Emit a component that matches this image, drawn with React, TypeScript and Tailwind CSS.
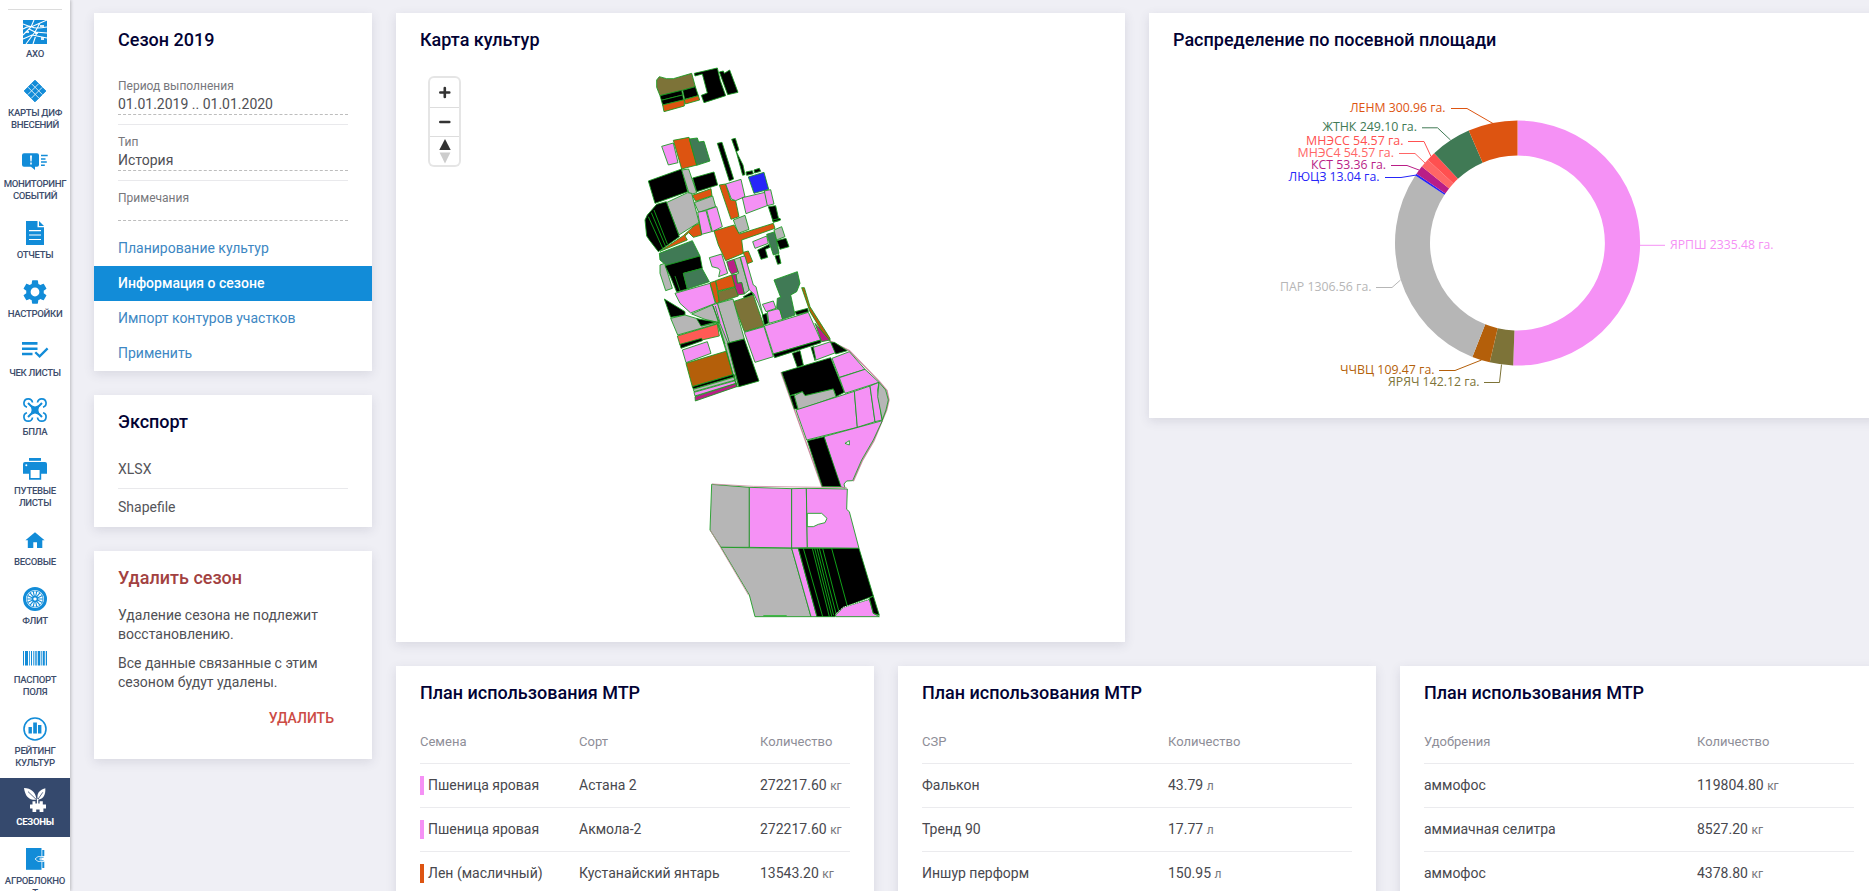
import type { ReactNode } from "react";
import { MdSettings } from "react-icons/md";

const BLUE = "#128cd8";

function Icon({ children }: { children: ReactNode }) {
  return (
    <svg viewBox="0 0 24 24" className="size-6 overflow-visible" fill="currentColor" stroke="none">
      {children}
    </svg>
  );
}

function spokes(count: number, from: number, to: number) {
  return Array.from({ length: count }, (_, i) => {
    const a = (i / count) * Math.PI * 2;
    return `M${12 + from * Math.cos(a)} ${12 + from * Math.sin(a)}L${12 + to * Math.cos(a)} ${12 + to * Math.sin(a)}`;
  }).join("");
}

const icons: Record<string, ReactNode> = {
  fields: (
    <Icon>
      <rect width="24" height="24" />
      <path
        d="M0 4L8 7L24 0M0 9Q6 5 9 7T24 7M11 0L8 7L0 15M17 3L12 12L3 24M0 19L9 15L24 18M6 9L12 12L24 13M14 12L10 24"
        fill="none"
        stroke="#fff"
        strokeWidth="1.1"
      />
      <path d="M17 5h4v2h-4zM3 11h3v2H3zM12 12h3v2h-3zM18 17h3v3h-3z" fill="#fff" opacity=".85" />
    </Icon>
  ),
  diamond: (
    <Icon>
      <path d="M12 1.2L22.8 12L12 22.8L1.2 12Z" stroke="currentColor" strokeLinejoin="round" />
      <path
        d="M5 8.2L15.8 19M8.6 4.8L19.4 15.6M8.4 19.2L19.2 8.4M4.8 15.6L15.6 4.8"
        stroke="#fff"
        strokeWidth="1"
        opacity=".8"
      />
    </Icon>
  ),
  monitor: (
    <Icon>
      <path d="M1 3.3H14Q16 3.3 16 5.3V14.7Q16 16.7 14 16.7H12V20L8 16.7H1Q-1 16.7 -1 14.7V5.3Q-1 3.3 1 3.3Z" />
      <path d="M7 5.5h2l-.4 6H7.4zM7.2 12.6h1.6v1.8H7.2z" fill="#fff" />
      <path d="M18 5.5h6.7M18 9h4.5M18 12h5.8M18 15.3h3.8" stroke="currentColor" strokeWidth="1.5" />
    </Icon>
  ),
  report: (
    <Icon>
      <path d="M3 0H14.5V6.3H21V24H3Z" />
      <path d="M16 0L21 5H16Z" />
      <path d="M6 9.7h12M6 14h12M6 18.5h12" stroke="#fff" strokeWidth="1.2" />
    </Icon>
  ),
  settings: <MdSettings className="size-6 scale-[1.22]" />,
  checklist: (
    <Icon>
      <path d="M-1 4.4H14.5M-1 9.8H14.5M-1 15H9.5" stroke="currentColor" strokeWidth="2.6" fill="none" />
      <path d="M12.3 13.2L16.6 17.4L24.6 9.4" stroke="currentColor" strokeWidth="2.3" fill="none" />
    </Icon>
  ),
  drone: (
    <Icon>
      <g fill="none" stroke="currentColor" strokeWidth="1.7">
        <path d="M4 9.2A4.3 4.3 0 1 1 9.5 4.5M14.5 4.5A4.3 4.3 0 1 1 20 9.2M20 14.8A4.3 4.3 0 1 1 14.5 19.5M9.5 19.5A4.3 4.3 0 1 1 4 14.8" />
        <path d="M5 5L9.5 9.5M19 5L14.5 9.5M5 19L9.5 14.5M19 19L14.5 14.5" strokeWidth="2" />
      </g>
      <path d="M7.5 7L12 8.6L16.5 7L15.4 12L16.5 17L12 15.4L7.5 17L8.6 12Z" />
    </Icon>
  ),
  printer: (
    <Icon>
      <path d="M6 1h12v2.8H6z" />
      <path d="M2 5H22Q24 5 24 7V16.8H18.2V22.7H6V16.8H0V7Q0 5 2 5Z" />
      <path d="M7.6 13h9v8h-9z" fill="#fff" />
      <circle cx="3.3" cy="8.3" r="1" fill="#fff" />
    </Icon>
  ),
  house: (
    <Icon>
      <path d="M12 4.2L21.6 12.2H19.3V20H14V14.3H10.3V20H4.8V12.2H2.4Z" />
    </Icon>
  ),
  wheel: (
    <Icon>
      <circle cx="12" cy="12" r="10.5" fill="none" stroke="currentColor" strokeWidth="3" />
      <path d={spokes(14, 2, 8.2)} stroke="currentColor" strokeWidth="1.1" />
      <circle cx="12" cy="12" r="8" fill="none" stroke="currentColor" strokeWidth=".7" />
      <circle cx="12" cy="12" r="2.4" fill="none" stroke="currentColor" strokeWidth="1.3" />
    </Icon>
  ),
  barcode: (
    <Icon>
      <path d="M0 5h1v14.5H0zM2 5h3v14.5H2zM6.2 5h.8v14.5h-.8zM8 5h1v14.5H8zM10.3 5h1v14.5h-1zM12.3 5h1.4v14.5h-1.4zM14.7 5h2.6v14.5h-2.6zM18.3 5h.8v14.5h-.8zM19.8 5h2v14.5h-2zM22.8 5h1.2v14.5h-1.2z" />
    </Icon>
  ),
  rating: (
    <Icon>
      <circle cx="12" cy="12" r="11" fill="none" stroke="currentColor" strokeWidth="1.6" />
      <path d="M5.5 10h3.4v6.5H5.5zM10.2 5.4h3.7v11.1h-3.7zM15 8h3.4v8.5H15z" />
    </Icon>
  ),
  seasons: (
    <Icon>
      <path d="M1 0C8 .3 12.5 3.5 13.6 11.8C6.3 12.4 2.3 9 1 0Z" />
      <path d="M22.3 .2C22.8 6.2 20.6 11 15 11.8C13 6.5 16 1.6 22.3 .2Z" />
      <path d="M5 3.6L14 12.2M19.8 4.3L14.8 11.5" stroke="#35496d" strokeWidth=".8" fill="none" />
      <path d="M14.6 11V16" stroke="currentColor" strokeWidth="1.4" />
      <path d="M9.5 13.2H12.4V15.6H16.6V13.2H19.8V16.6H23V20.4H20.4V24H16.6V21.6H13.2V24H9.5V20.4H7V16.6H9.5Z" />
    </Icon>
  ),
  notebook: (
    <Icon>
      <path d="M3 1H18.5V22.8H3Z" />
      <path d="M19.3 3h2v6h-2zM19.3 14.5h2v6.5h-2z" />
      <path d="M21 9.6H15L12 12L15 14.4H21V12.9H17V11.1H21Z" fill={BLUE} stroke="#fff" strokeWidth=".8" />
    </Icon>
  ),
};

const menu: { icon: string; label: string[]; active?: boolean }[] = [
  { icon: "fields", label: ["АХО"] },
  { icon: "diamond", label: ["КАРТЫ ДИФ", "ВНЕСЕНИЙ"] },
  { icon: "monitor", label: ["МОНИТОРИНГ", "СОБЫТИЙ"] },
  { icon: "report", label: ["ОТЧЕТЫ"] },
  { icon: "settings", label: ["НАСТРОЙКИ"] },
  { icon: "checklist", label: ["ЧЕК ЛИСТЫ"] },
  { icon: "drone", label: ["БПЛА"] },
  { icon: "printer", label: ["ПУТЕВЫЕ", "ЛИСТЫ"] },
  { icon: "house", label: ["ВЕСОВЫЕ"] },
  { icon: "wheel", label: ["ФЛИТ"] },
  { icon: "barcode", label: ["ПАСПОРТ", "ПОЛЯ"] },
  { icon: "rating", label: ["РЕЙТИНГ", "КУЛЬТУР"] },
  { icon: "seasons", label: ["СЕЗОНЫ"], active: true },
  { icon: "notebook", label: ["АГРОБЛОКНО", "Т"] },
];

function Sidebar() {
  return (
    <nav className="z-10 flex w-[70px] shrink-0 flex-col bg-white pt-[9px] shadow-[1px_0_3px_rgba(0,0,0,0.22)]">
      <div className="mx-2 h-px shrink-0 bg-[#dcdcdc]" />
      {menu.map((item) => (
        <div
          key={item.icon}
          className={`flex shrink-0 flex-col items-center pt-2.5 pb-[9px] ${item.active ? "bg-[#35496d] text-white" : "text-[#128cd8]"}`}
        >
          {icons[item.icon]}
          <div
            className={`mt-1 text-center text-[9.6px] leading-3 tracking-[-0.32px] whitespace-nowrap ${item.active ? "font-bold text-white" : "font-medium text-[#3d4d6c]"}`}
          >
            {item.label.map((line) => (
              <div key={line}>{line}</div>
            ))}
          </div>
        </div>
      ))}
    </nav>
  );
}

function Card({ title, className = "", danger, children }: { title: string; className?: string; danger?: boolean; children: ReactNode }) {
  return (
    <section className={`shrink-0 bg-white shadow-[0_3px_10px_rgba(60,60,90,0.13)] ${className}`}>
      <h2 className={`px-6 pt-4 text-[18px] leading-[22px] font-medium ${danger ? "text-[#a24141]" : "text-[#020234]"}`}>{title}</h2>
      {children}
    </section>
  );
}

function Field({ label, value, last }: { label: string; value?: string; last?: boolean }) {
  return (
    <div className={last ? "" : "mb-[9px] border-b border-[#e9e9ec] pb-[9px]"}>
      <div className="text-[12px] leading-4 text-[#77777c]">{label}</div>
      <div className={`border-b border-dashed border-[#bdbdbd] text-[14px] leading-5 text-[#505055] ${last ? "h-[15px]" : "h-[21px]"}`}>{value}</div>
    </div>
  );
}

const links = ["Планирование культур", "Информация о сезоне", "Импорт контуров участков", "Применить"];

function LeftColumn() {
  return (
    <div className="flex w-[278px] shrink-0 flex-col gap-6">
      <Card title="Сезон 2019" className="h-[358px]">
        <div className="mx-6 mt-[27px] mb-[10px] flex flex-col">
          <Field label="Период выполнения" value="01.01.2019 .. 01.01.2020" />
          <Field label="Тип" value="История" />
          <Field label="Примечания" last />
        </div>
        <ul>
          {links.map((link, i) => (
            <li
              key={link}
              className={`h-[35px] px-6 text-[14px] leading-[35px] ${i === 1 ? "bg-[#128cd8] font-medium text-white" : "text-[#3d87c3]"}`}
            >
              {link}
            </li>
          ))}
        </ul>
      </Card>
      <Card title="Экспорт" className="h-[132px]">
        <div className="mx-6 mt-[17px] text-[14px] text-[#55555a]">
          <div className="h-[39px] border-b border-[#e9e9ec] leading-[38px]">XLSX</div>
          <div className="leading-[36px]">Shapefile</div>
        </div>
      </Card>
      <Card title="Удалить сезон" className="h-[208px]" danger>
        <div className="mx-6 mt-[17px] text-[14px] leading-[19px] text-[#505055]">
          <p>
            Удаление сезона не подлежит
            <br />
            восстановлению.
          </p>
          <p className="mt-2.5">
            Все данные связанные с этим
            <br />
            сезоном будут удалены.
          </p>
        </div>
        <div className="mt-4 pr-[38px] text-right text-[14px] leading-5 font-medium text-[#cc4b45]">УДАЛИТЬ</div>
      </Card>
    </div>
  );
}

const P = "#f591f5";
const O = "#dd5411";
const G = "#407a55";
const K = "#000000";
const S = "#b6b6b6";
const V = "#7d7338";
const N = "#b45f0a";
const M = "#b91e87";
const R = "#ff5a55";
const B = "#2626f8";
const W = "#ffffff";

type Parcel = [string, string];

const north: Parcel[] = [
  [V, "80,90 88,80 110,86 130,86 185,70 196,110 157,121 90,137 80,112"],
  [K, "90,137 155,121 158,135 94,151"],
  [K, "94,151 158,135 161,150 98,165"],
  [K, "158,121 196,110 205,137 164,148"],
  [O, "98,165 163,149 163,168 102,185"],
  [O, "163,149 205,137 209,150 166,162"],
  [K, "193,70 262,54 271,92 287,137 222,158 214,136 232,129 217,72 195,78"],
  [K, "268,66 280,63 283,70 299,60 324,127 293,134"],
  [P, "95,289 130,279 144,338 115,345"],
  [O, "130,271 177,262 201,345 155,357"],
  [G, "178,267 202,264 206,276 222,274 240,333 200,346"],
  [K, "262,280 276,277 311,387 298,393"],
  [K, "305,268 316,265 327,300 319,305 339,345 345,374 338,376 320,310"],
  [K, "348,366 367,362 370,371 350,376"],
  [K, "372,360 388,355 392,364 374,369"],
  [K, "55,393 155,357 173,425 75,460"],
  [S, "155,360 176,357 200,428 188,432 177,430"],
  [K, "188,384 252,366 263,405 200,425"],
  [O, "187,436 243,416 246,437 197,454"],
  [S, "193,458 248,438 257,470 206,487"],
  [P, "203,487 228,482 245,545 215,553"],
  [P, "230,480 260,470 277,530 247,545"],
  [O, "268,405 287,402 302,450 317,452 327,500 303,508"],
  [P, "287,402 333,388 345,440 317,452 304,447"],
  [B, "355,381 402,367 416,418 372,430"],
  [P, "337,443 405,427 414,466 348,491"],
  [P, "403,423 422,419 432,462 412,467"],
  [K, "415,470 437,467 447,512 430,517"],
  [S, "109,458 173,428 185,430 207,517 147,555"],
  [K, "45,510 52,495 80,463 109,455 148,560 85,605 58,570 50,558"],
  [S, "310,510 345,496 357,538 325,550"],
];

const middle: Parcel[] = [
  [O, "252,33 312,15 328,42 430,10 435,25 335,60 340,100 287,122 265,75"],
  [O, "90,94 160,47 192,18 208,10 215,45 190,52 176,38 165,48 172,60"],
  [G, "88,100 187,62 210,108 110,137 90,120"],
  [S, "90,135 104,130 127,205 107,212 90,160"],
  [K, "105,137 210,108 217,145 160,160 172,207 140,216 122,172"],
  [G, "160,160 216,145 238,185 172,207"],
  [P, "135,220 240,190 256,250 182,279 150,250"],
  [P, "238,113 275,102 293,160 266,170 270,152 265,145 246,140"],
  [M, "290,125 313,118 325,155 305,163 297,150"],
  [O, "340,97 355,93 368,125 350,132"],
  [S, "313,118 330,112 358,210 343,222 335,188 322,190 318,163 326,160"],
  [P, "331,111 345,108 370,195 378,200 400,290 385,250 372,222 358,210"],
  [M, "305,165 318,163 322,190 335,188 343,222 322,225"],
  [O, "240,188 257,183 268,247 258,250"],
  [O, "257,182 305,165 315,200 264,213"],
  [V, "264,215 315,202 325,228 268,247"],
  [K, "340,230 365,216 370,225 343,235"],
  [V, "309,245 370,225 402,318 343,335"],
  [S, "262,250 309,237 343,357 298,368"],
  [P, "247,255 262,250 298,368 290,371"],
  [S, "185,282 247,255 268,308 225,298"],
  [K, "103,237 165,275 165,285 122,292"],
  [S, "122,295 165,285 205,297 215,318 262,308 258,312 143,345"],
  [K, "200,296 258,306 213,318"],
  [R, "142,348 262,312 268,348 150,375"],
  [K, "150,373 215,355 217,362 153,385"],
  [P, "157,390 232,365 243,400 168,428"],
  [N, "168,430 290,393 312,463 187,500"],
  [S, "260,306 270,310 295,372 326,500 318,500 288,385"],
  [K, "187,500 312,463 314,470 190,507"],
  [S, "190,508 314,471 316,480 192,515"],
  [P, "192,517 316,482 318,490 195,528"],
  [M, "195,530 320,490 320,500 196,543"],
  [K, "292,370 343,357 387,483 327,500"],
  [P, "343,337 402,320 430,410 375,427"],
  [P, "403,318 535,277 572,360 430,402"],
  [K, "430,402 572,360 573,368 434,413"],
  [P, "397,253 430,243 438,265 408,275"],
  [P, "412,275 448,265 458,298 417,310"],
  [K, "397,285 410,280 415,310 403,315"],
  [G, "432,180 502,155 510,190 500,215 482,225 495,285 458,298 450,270 440,265 442,235 452,232"],
  [K, "495,275 533,265 535,275 500,285"],
  [M, "555,310 600,360 575,365"],
  [N, "515,203 523,203 540,260 600,355 600,362 573,330 540,275"],
  [P, "368,65 410,48 415,70 375,85"],
  [K, "383,90 418,73 420,82 406,88 413,112 393,118"],
  [G, "410,43 435,35 447,100 430,105"],
  [S, "432,30 455,20 465,50 440,60"],
  [K, "440,62 468,55 477,80 450,88"],
  [K, "435,108 447,104 453,130 443,133"],
  [K, "428,0 450,-5 452,0 430,6"],
];

const east: Parcel[] = [
  [K, "125,187 272,143 313,247 288,260 280,237 195,257 187,245 150,257"],
  [K, "150,257 163,255 174,297 163,297"],
  [S, "163,257 187,245 195,257 280,237 288,260 175,300"],
  [K, "157,130 180,122 190,165 172,172"],
  [K, "213,112 222,110 228,140 225,152"],
  [P, "220,112 272,95 287,128 228,150"],
  [K, "272,97 283,97 322,122 287,132"],
  [P, "276,145 328,125 375,178 298,202"],
  [P, "298,203 375,178 417,217 315,250"],
  [P, "168,300 343,244 352,352 200,390"],
  [P, "343,244 390,228 405,335 352,352"],
  [P, "390,228 417,217 413,240 425,325 427,330 405,335"],
  [S, "417,217 437,240 445,270 438,300 427,330 413,260"],
  [P, "252,380 427,332 400,390 365,450 338,512 320,513 312,522 315,534 300,530"],
  [K, "202,392 252,380 303,530 247,530"],
  [W, "315,400 328,392 328,405"],
];

const south: Parcel[] = [
  [S, "65,43 178,52 178,232 93,232 60,180"],
  [P, "178,52 305,56 305,234 178,232"],
  [P, "305,56 349,55 352,233 305,234"],
  [P, "349,55 472,57 470,118 478,125 507,235 352,233"],
  [W, "352,130 395,130 411,145 405,158 385,163 370,170 352,170"],
  [S, "93,232 305,235 363,440 195,440 178,375"],
  [P, "305,235 325,235 381,440 363,440"],
  [K, "325,235 507,235 550,378 480,405 437,432 435,440 381,440"],
  [P, "437,435 460,412 538,388 550,430 568,440 437,440"],
  [K, "538,385 550,378 568,436 550,430"],
];

function Parcels({ x, y, items, children }: { x: number; y: number; items: Parcel[]; children?: ReactNode }) {
  return (
    <g transform={`translate(${x} ${y}) scale(0.33333)`} stroke="#169a1e" strokeWidth="2.6" strokeLinejoin="round">
      {items.map(([fill, points]) => (
        <polygon key={points} points={points} fill={fill} />
      ))}
      {children}
    </g>
  );
}

function CropMap() {
  return (
    <svg viewBox="630 60 270 565" className="h-[565px] w-[270px]">
      <g transform="translate(740 310) scale(0.33333)" fill="none" stroke="#c98ba0" strokeWidth="4">
        <path d="M210 0L268 92L328 122L418 214L441 242L447 270L440 300L402 392L367 452L340 514M123 187L246 531" />
      </g>
      <Parcels x={630} y={50} items={north}>
        <path d="M55 500L98 595M64 488L107 590M72 480L112 582" fill="none" stroke="#12b01c" />
      </Parcels>
      <Parcels x={630} y={220} items={middle}>
        <path d="M135 168L150 212M250 258L285 372M262 305L320 500M256 258L270 308" fill="none" />
      </Parcels>
      <Parcels x={740} y={310} items={east} />
      <Parcels x={690} y={470} items={south}>
        <path
          d="M340 235L398 440M367 235L418 440M374 235L425 438M381 235L431 436M388 235L438 430M398 235L446 422M425 235L472 408M220 437H290"
          fill="none"
          stroke="#12b81c"
        />
        <path d="M66 42L190 49L470 53M61 181L92 233L176 376" fill="none" stroke="#c98ba0" strokeWidth="2.5" />
        <path d="M437 432L460 412L538 386" fill="none" stroke="#fff" strokeDasharray="4 3" />
      </Parcels>
    </svg>
  );
}

function MapControls() {
  return (
    <div className="absolute top-[65px] left-[34px] w-[29px] rounded-[4px] bg-white shadow-[0_0_0_2px_rgba(0,0,0,0.1)]">
      <svg viewBox="0 0 29 87" className="h-[87px] w-[29px]">
        <path d="M0 29.5H29M0 58.5H29" stroke="#ddd" />
        <path d="M10.3 14.5H19.3M14.8 10V19M10.3 44H19.3" stroke="#333" strokeWidth="2.6" strokeLinecap="round" />
        <path d="M15 61L20.7 72H9.3Z" fill="#333" />
        <path d="M9.6 74.5H20.4L15 85.5Z" fill="#ccc" />
      </svg>
    </div>
  );
}

const slices = [
  { value: 2335.48, color: P, label: "ЯРПШ 2335.48 га.", x: 1670, y: 249, w: 103.5, line: "1640,245.3 1665,245.3" },
  { value: 142.12, color: V, label: "ЯРЯЧ 142.12 га.", x: 1388, y: 386, w: 91.5, line: "1501.5,364.5 1499.5,382.5 1484,382.5" },
  { value: 109.47, color: N, label: "ЧЧВЦ 109.47 га.", x: 1340, y: 374, w: 94.5, line: "1481.5,360 1455,370.5 1439,370.5" },
  { value: 1306.56, color: S, label: "ПАР 1306.56 га.", x: 1280, y: 291, w: 91.5, line: "1400.5,280 1392,287.5 1376,287.5" },
  { value: 13.04, color: B, label: "ЛЮЦЗ 13.04 га.", x: 1288.5, y: 181, w: 91, line: "1416.5,175 1401,177.5 1385,177.5" },
  { value: 53.36, color: M, label: "КСТ 53.36 га.", x: 1311, y: 169, w: 75, line: "1419,170 1407,165.5 1391,165.5" },
  { value: 54.57, color: "#ff6666", label: "МНЭС4 54.57 га.", x: 1297.5, y: 157, w: 96.5, line: "1425,163 1415,153.5 1399,153.5" },
  { value: 54.57, color: "#ff5050", label: "МНЭСС 54.57 га.", x: 1306, y: 145, w: 97.5, line: "1431,156.5 1424,141.5 1408,141.5" },
  { value: 249.1, color: G, label: "ЖТНК 249.10 га.", x: 1322.5, y: 131, w: 94.5, line: "1450.5,140 1437.5,127.8 1422,127.8" },
  { value: 300.96, color: O, label: "ЛЕНМ 300.96 га.", x: 1350, y: 112, w: 95.5, line: "1493,123.5 1467,108.5 1451,108.5" },
];

function Donut() {
  const cx = 1517.5;
  const cy = 243;
  const outer = 122.5;
  const inner = 87.5;
  const total = slices.reduce((sum, s) => sum + s.value, 0);
  let angle = -Math.PI / 2;
  return (
    <svg viewBox="1173 80 696 320" className="mt-[29px] ml-6 h-[320px] w-[696px]">
      {slices.map((s) => {
        const a = angle;
        const b = angle + (s.value / total) * Math.PI * 2;
        angle = b;
        const large = b - a > Math.PI ? 1 : 0;
        const pt = (r: number, t: number) => `${(cx + r * Math.cos(t)).toFixed(2)} ${(cy + r * Math.sin(t)).toFixed(2)}`;
        return (
          <g key={s.label}>
            <path
              d={`M${pt(outer, a)}A${outer} ${outer} 0 ${large} 1 ${pt(outer, b)}L${pt(inner, b)}A${inner} ${inner} 0 ${large} 0 ${pt(inner, a)}Z`}
              fill={s.color}
            />
            <polyline points={s.line} fill="none" stroke={s.color} />
            <text x={s.x} y={s.y} textLength={s.w} lengthAdjust="spacingAndGlyphs" fill={s.color} className="font-['Open_Sans','Noto_Sans',sans-serif] text-[12px]">
              {s.label}
            </text>
          </g>
        );
      })}
    </svg>
  );
}

type Row = { name: string; sort?: string; amount: string; unit: string; color?: string };

function PlanTable({ name, rows, cols, withSort }: { name: string; rows: Row[]; cols: string; withSort?: boolean }) {
  return (
    <Card title="План использования МТР" className="h-[420px] w-[478px]">
      <div className="mx-6 mt-[15px]">
        <div className={`grid h-[45px] items-center border-b border-[#ebebee] pt-0.5 text-[13px] text-[#8e8e98] ${cols}`}>
          <div>{name}</div>
          {withSort && <div>Сорт</div>}
          <div>Количество</div>
        </div>
        {rows.map((r, i) => (
          <div key={i} className={`grid h-11 items-center border-b border-[#ebebee] text-[14px] whitespace-nowrap text-[#48484e] ${cols}`}>
            <div className="flex items-center">
              {r.color && <span className="mr-1 h-[19px] w-1" style={{ backgroundColor: r.color }} />}
              {r.name}
            </div>
            {withSort && <div>{r.sort}</div>}
            <div>
              {r.amount} <span className="text-[12px] text-[#77777c]">{r.unit}</span>
            </div>
          </div>
        ))}
      </div>
    </Card>
  );
}

export default function App() {
  return (
    <div className="flex h-[891px] w-full overflow-hidden bg-[#efeff5] font-[Roboto,sans-serif]">
      <Sidebar />
      <main className="flex min-w-0 flex-1 gap-6 overflow-hidden pt-[13px] pl-6">
        <LeftColumn />
        <div className="flex shrink-0 flex-col gap-6">
          <div className="flex items-start gap-6">
            <Card title="Карта культур" className="relative h-[629px] w-[729px]">
              <MapControls />
              <div className="mt-[9px] pl-[234px]">
                <CropMap />
              </div>
            </Card>
            <Card title="Распределение по посевной площади" className="h-[405px] w-[729px]">
              <Donut />
            </Card>
          </div>
          <div className="flex gap-6">
            <PlanTable
              name="Семена"
              withSort
              cols="grid-cols-[159px_181px_1fr]"
              rows={[
                { name: "Пшеница яровая", sort: "Астана 2", amount: "272217.60", unit: "кг", color: P },
                { name: "Пшеница яровая", sort: "Акмола-2", amount: "272217.60", unit: "кг", color: P },
                { name: "Лен (масличный)", sort: "Кустанайский янтарь", amount: "13543.20", unit: "кг", color: O },
              ]}
            />
            <PlanTable
              name="СЗР"
              cols="grid-cols-[246px_1fr]"
              rows={[
                { name: "Фалькон", amount: "43.79", unit: "л" },
                { name: "Тренд 90", amount: "17.77", unit: "л" },
                { name: "Иншур перформ", amount: "150.95", unit: "л" },
              ]}
            />
            <PlanTable
              name="Удобрения"
              cols="grid-cols-[273px_1fr]"
              rows={[
                { name: "аммофос", amount: "119804.80", unit: "кг" },
                { name: "аммиачная селитра", amount: "8527.20", unit: "кг" },
                { name: "аммофос", amount: "4378.80", unit: "кг" },
              ]}
            />
          </div>
        </div>
      </main>
    </div>
  );
}
